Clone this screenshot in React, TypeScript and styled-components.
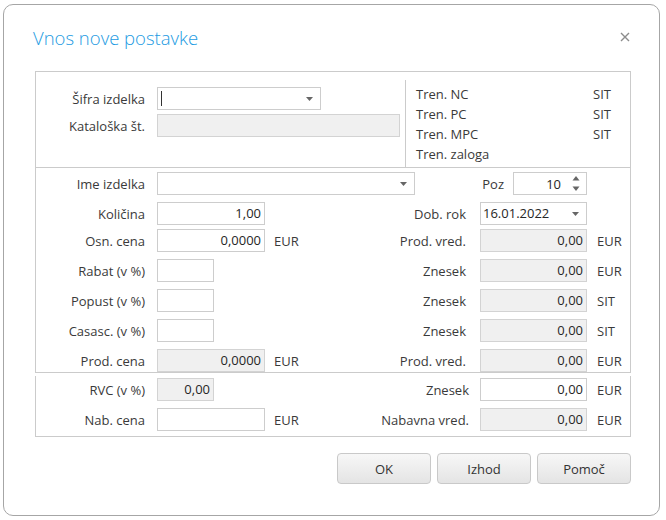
import React from 'react';
import styled, { createGlobalStyle } from 'styled-components';

const GlobalStyle = createGlobalStyle`
  html, body {
    margin: 0;
    padding: 0;
    background: #ffffff;
  }
  body {
    font-family: 'Open Sans', 'Noto Sans', sans-serif;
    font-size: 13px;
    color: #3a3a3a;
  }
`;

const Dialog = styled.div`
  box-sizing: border-box;
  width: 657px;
  height: 512px;
  margin: 4px 0 0 3px;
  padding: 0 28px 0 31px;
  border: 1px solid #a6a6a6;
  border-radius: 10px;
  background: #ffffff;
`;

const Header = styled.div`
  display: flex;
  align-items: center;
  justify-content: space-between;
  height: 26px;
  margin-top: 20px;
`;

const Title = styled.div`
  margin-left: -2px;
  font-size: 18.5px;
  font-weight: 300;
  color: #1c9be2;
  line-height: 26px;
`;

const CloseBtn = styled.div`
  display: flex;
  width: 10px;
  height: 10px;
  margin-right: 1px;
  margin-top: -2px;
`;

const UpperBox = styled.div`
  margin-top: 20px;
  border: 1px solid #cbcbcb;
`;

const TopSection = styled.div`
  display: flex;
  height: 95px;
  border-bottom: 1px solid #cbcbcb;
`;

const TopLeft = styled.div`
  width: 369px;
  padding-top: 15px;
`;

const VDivider = styled.div`
  width: 1px;
  margin-top: 8px;
  background: #cbcbcb;
`;

const InfoList = styled.div`
  padding: 12px 0 0 10px;
`;

const InfoRow = styled.div`
  display: grid;
  grid-template-columns: 177px auto;
  line-height: 20px;
`;

const MiddleSection = styled.div`
  padding: 4px 0 0;
`;

const LowerBox = styled.div`
  margin-top: 3px;
  padding: 2px 0 5px;
  border: 1px solid #cbcbcb;
  border-top: none;
`;

const Row = styled.div<{ $mt?: number }>`
  display: flex;
  align-items: center;
  height: 23px;
  margin-top: ${p => p.$mt ?? 0}px;
`;

const Label = styled.div`
  width: 109px;
  margin-right: 12px;
  text-align: right;
  white-space: nowrap;
`;

const RightGroup = styled.div`
  display: flex;
  align-items: center;
  margin-left: auto;
`;

const RLabel = styled.div<{ $gap?: number }>`
  margin-right: ${p => p.$gap ?? 14}px;
  text-align: right;
  white-space: nowrap;
`;

const Unit = styled.div`
  margin-left: 9px;
`;

const RUnit = styled.div`
  box-sizing: border-box;
  width: 43px;
  padding-left: 10px;
`;

const Field = styled.div<{ $w: number; $off?: boolean }>`
  box-sizing: border-box;
  width: ${p => p.$w}px;
  height: 23px;
  padding: 0 3px;
  border: 1px solid ${p => (p.$off ? '#d3d3d3' : '#cdcdcd')};
  background: ${p => (p.$off ? '#f0f0f0' : '#ffffff')};
  color: #262626;
  line-height: 21px;
  text-align: right;
`;

const Combo = styled.div<{ $w: number }>`
  box-sizing: border-box;
  display: flex;
  align-items: center;
  width: ${p => p.$w}px;
  height: 23px;
  padding: 0 7px 0 2px;
  border: 1px solid #cdcdcd;
  background: #ffffff;
  color: #262626;
`;

const ComboText = styled.div`
  flex: 1;
  line-height: 21px;
`;

const Caret = styled.div`
  width: 1px;
  height: 15px;
  margin-left: 1px;
  background: #333333;
`;

const Spinner = styled.div`
  box-sizing: border-box;
  display: flex;
  align-items: center;
  width: 74px;
  height: 23px;
  padding: 0 6px 0 3px;
  border: 1px solid #cdcdcd;
  color: #262626;
`;

const SpinValue = styled.div`
  flex: 1;
  text-align: right;
  margin-right: 11px;
`;

const ButtonBar = styled.div`
  display: flex;
  justify-content: flex-end;
  gap: 6px;
  margin-top: 16px;
`;

const Button = styled.button`
  box-sizing: border-box;
  width: 94px;
  height: 31px;
  padding: 0;
  border: 1px solid #c9c9c9;
  border-radius: 4px;
  background: linear-gradient(#f7f7f7, #e4e4e4);
  font-family: 'Open Sans', 'Noto Sans', sans-serif;
  font-size: 13px;
  color: #333333;
`;

const Arrow = () => (
  <svg width="7" height="4" viewBox="0 0 7 4">
    <path d="M0 0 L7 0 L3.5 4 Z" fill="#666666" />
  </svg>
);

const SpinArrows = () => (
  <svg width="8" height="17" viewBox="0 0 8 17">
    <path d="M4 1 L7.5 5.5 L0.5 5.5 Z" fill="#666666" />
    <path d="M0.5 11.5 L7.5 11.5 L4 16 Z" fill="#666666" />
  </svg>
);

type RightProps = { label: string; value: string; unit: string; gap?: number; open?: boolean };

function RightField({ label, value, unit, gap, open }: RightProps) {
  return (
    <RightGroup>
      <RLabel $gap={gap}>{label}</RLabel>
      <Field $w={107} $off={!open}>{value}</Field>
      <RUnit>{unit}</RUnit>
    </RightGroup>
  );
}

const info = [
  ['Tren. NC', 'SIT'],
  ['Tren. PC', 'SIT'],
  ['Tren. MPC', 'SIT'],
  ['Tren. zaloga', ''],
];

export default function App() {
  return (
    <>
      <GlobalStyle />
      <Dialog>
        <Header>
          <Title>Vnos nove postavke</Title>
          <CloseBtn>
            <svg width="10" height="10" viewBox="0 0 10 10">
              <path d="M1 1 L9 9 M9 1 L1 9" stroke="#8c8c8c" strokeWidth="1.4" />
            </svg>
          </CloseBtn>
        </Header>

        <UpperBox>
          <TopSection>
            <TopLeft>
              <Row>
                <Label>Šifra izdelka</Label>
                <Combo $w={164}>
                  <ComboText><Caret /></ComboText>
                  <Arrow />
                </Combo>
              </Row>
              <Row $mt={4}>
                <Label>Kataloška št.</Label>
                <Field $w={243} $off />
              </Row>
            </TopLeft>
            <VDivider />
            <InfoList>
              {info.map(([name, unit]) => (
                <InfoRow key={name}>
                  <span>{name}</span>
                  <span>{unit}</span>
                </InfoRow>
              ))}
            </InfoList>
          </TopSection>

          <MiddleSection>
            <Row>
              <Label>Ime izdelka</Label>
              <Combo $w={258}>
                <ComboText />
                <Arrow />
              </Combo>
              <RightGroup>
                <RLabel $gap={9}>Poz</RLabel>
                <Spinner>
                  <SpinValue>10</SpinValue>
                  <SpinArrows />
                </Spinner>
                <RUnit />
              </RightGroup>
            </Row>
            <Row $mt={7}>
              <Label>Količina</Label>
              <Field $w={108}>1,00</Field>
              <RightGroup>
                <RLabel>Dob. rok</RLabel>
                <Combo $w={107}>
                  <ComboText>16.01.2022</ComboText>
                  <Arrow />
                </Combo>
                <RUnit />
              </RightGroup>
            </Row>
            <Row $mt={4}>
              <Label>Osn. cena</Label>
              <Field $w={108}>0,0000</Field>
              <Unit>EUR</Unit>
              <RightField label="Prod. vred." value="0,00" unit="EUR" />
            </Row>
            <Row $mt={7}>
              <Label>Rabat (v %)</Label>
              <Field $w={57} />
              <RightField label="Znesek" value="0,00" unit="EUR" />
            </Row>
            <Row $mt={7}>
              <Label>Popust (v %)</Label>
              <Field $w={57} />
              <RightField label="Znesek" value="0,00" unit="SIT" />
            </Row>
            <Row $mt={7}>
              <Label>Casasc. (v %)</Label>
              <Field $w={57} />
              <RightField label="Znesek" value="0,00" unit="SIT" />
            </Row>
            <Row $mt={7}>
              <Label>Prod. cena</Label>
              <Field $w={108} $off>0,0000</Field>
              <Unit>EUR</Unit>
              <RightField label="Prod. vred." value="0,00" unit="EUR" />
            </Row>
          </MiddleSection>
        </UpperBox>

        <LowerBox>
          <Row>
            <Label>RVC (v %)</Label>
            <Field $w={57} $off>0,00</Field>
            <RightField label="Znesek" value="0,00" unit="EUR" gap={11} open />
          </Row>
          <Row $mt={7}>
            <Label>Nab. cena</Label>
            <Field $w={108} />
            <Unit>EUR</Unit>
            <RightField label="Nabavna vred." value="0,00" unit="EUR" gap={11} />
          </Row>
        </LowerBox>

        <ButtonBar>
          <Button>OK</Button>
          <Button>Izhod</Button>
          <Button>Pomoč</Button>
        </ButtonBar>
      </Dialog>
    </>
  );
}
